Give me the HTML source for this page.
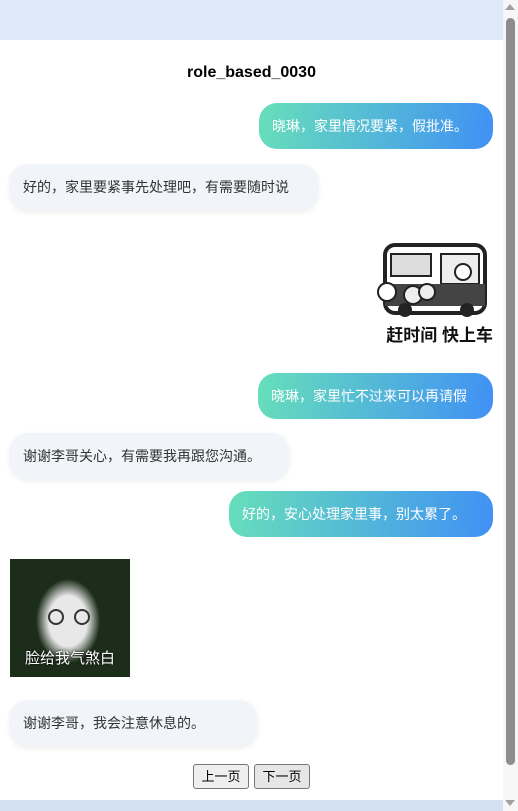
<!DOCTYPE html>
<html><head><meta charset="utf-8"><style>
html,body{margin:0;padding:0;width:518px;height:811px;overflow:hidden;font-family:"Liberation Sans","Noto Sans CJK SC",sans-serif}
body{background:linear-gradient(#dfe8f8,#d3e0f3);position:relative}
.page{position:absolute;left:0;top:40px;width:503px;height:760px;background:#fff}
.sb{position:absolute;left:503px;top:0;width:15px;height:811px;background:#f6f6f6}
.thumb{position:absolute;left:506px;top:18px;width:9px;height:747px;background:#8c8c8c;border-radius:5px}
.up{position:absolute;left:505px;top:4px;border-left:5px solid transparent;border-right:5px solid transparent;border-bottom:6px solid #a0a0a0}
.dn{position:absolute;left:505px;top:800px;border-left:5px solid transparent;border-right:5px solid transparent;border-top:6px solid #a0a0a0}
h1{position:absolute;top:24px;left:0;width:503px;text-align:center;font-size:16px;font-weight:bold;margin:0}
.b{position:absolute;height:46px;line-height:46px;font-size:14px;border-radius:18px;padding:0 13px;box-sizing:border-box;white-space:nowrap}
.r{right:10px;color:#fff;background:linear-gradient(100deg,#67dfba,#4090f5)}
.l{left:10px;color:#333;background:#f1f4f9;box-shadow:0 2px 6px rgba(0,0,0,.08)}
.btn{position:absolute;top:724px;height:25px;width:56px;border:1px solid #777;border-radius:3px;background:#efefef;font-size:13px;line-height:23px;text-align:center;box-sizing:border-box}
</style></head><body>
<div class="page">
<h1>role_based_0030</h1>
<div class="b r" style="top:63px;width:234px">晓琳，家里情况要紧，假批准。</div>
<div class="b l" style="top:124px;width:308px">好的，家里要紧事先处理吧，有需要随时说</div>
<div style="position:absolute;left:375px;top:200px;width:118px;height:105px">
<svg width="118" height="80" viewBox="0 0 118 80"><rect x="10" y="5" width="100" height="68" rx="10" fill="#fff" stroke="#222" stroke-width="4"/><rect x="16" y="14" width="40" height="22" fill="#ddd" stroke="#222" stroke-width="2"/><rect x="66" y="14" width="38" height="30" fill="#eee" stroke="#222" stroke-width="2"/><rect x="10" y="44" width="100" height="22" fill="#444"/><circle cx="30" cy="70" r="7" fill="#222"/><circle cx="92" cy="70" r="7" fill="#222"/><circle cx="12" cy="52" r="9" fill="#fff" stroke="#222" stroke-width="2"/><circle cx="38" cy="55" r="9" fill="#eee" stroke="#222" stroke-width="2"/><circle cx="52" cy="52" r="8" fill="#eee" stroke="#222" stroke-width="2"/><circle cx="88" cy="32" r="8" fill="#fff" stroke="#222" stroke-width="2"/></svg>
<div style="font-size:17px;font-weight:bold;color:#111;text-align:right;line-height:22px;letter-spacing:0">赶时间 快上车</div>
</div>
<div class="b r" style="top:333px;width:235px">晓琳，家里忙不过来可以再请假</div>
<div class="b l" style="top:393px;width:279px">谢谢李哥关心，有需要我再跟您沟通。</div>
<div class="b r" style="top:451px;width:264px">好的，安心处理家里事，别太累了。</div>
<div style="position:absolute;left:10px;top:519px;width:120px;height:118px;background:radial-gradient(ellipse 32px 42px at 58px 62px,#e8e8e8 60%,#1c2e1a 100%);overflow:hidden">
<div style="position:absolute;left:38px;top:50px;width:12px;height:12px;border:2px solid #333;border-radius:50%"></div>
<div style="position:absolute;left:64px;top:50px;width:12px;height:12px;border:2px solid #333;border-radius:50%"></div>
<div style="position:absolute;left:0;top:88px;width:120px;text-align:center;color:#fff;font-size:15px;text-shadow:0 0 2px #000">脸给我气煞白</div>
</div>
<div class="b l" style="top:660px;width:247px">谢谢李哥，我会注意休息的。</div>
<div class="btn" style="left:193px">上一页</div>
<div class="btn" style="left:254px;background:#e6e6e6">下一页</div>
</div>
<div class="sb"></div><div class="thumb"></div><div class="up"></div><div class="dn"></div>
</body></html>
